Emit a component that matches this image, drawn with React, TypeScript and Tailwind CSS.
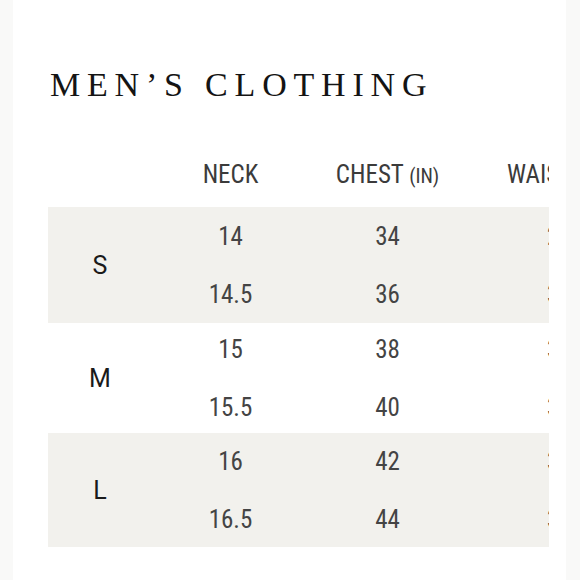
const sizes = [
  { size: 'S', rows: [['14', '34', '28 – 29'], ['14.5', '36', '30 – 31']], shade: true, h: 'h-[116px]' },
  { size: 'M', rows: [['15', '38', '32 – 33'], ['15.5', '40', '34 – 35']], shade: false, h: 'h-[110px]' },
  { size: 'L', rows: [['16', '42', '36 – 37'], ['16.5', '44', '38 – 39']], shade: true, h: 'h-[114px]' },
];

const narrow = "font-['Liberation_Sans_Narrow','Roboto_Condensed','DejaVu_Sans_Condensed',Roboto,sans-serif]";

export default function App() {
  return (
    <div className="w-[580px] h-[580px] bg-[#f9f9f8] overflow-hidden">
      <div className="ml-[13px] w-[553px] h-full bg-white">
        <h1 className="pt-[68px] pl-[37px] font-['Liberation_Serif',serif] text-[34px] leading-[34px] tracking-[0.2em] text-[#141414] whitespace-nowrap">
          MEN’S CLOTHING
        </h1>

        <div className={`mt-[39px] ml-[35px] w-[501px] overflow-hidden ${narrow}`}>
          <div className="flex h-[66px] items-center text-[25px] leading-none text-[#3b3b3b] whitespace-nowrap">
            <div className="w-[104px] shrink-0" />
            <div className="w-[157px] shrink-0 text-center">NECK</div>
            <div className="w-[157px] shrink-0 text-center">
              CHEST <span className="text-[20px]">(IN)</span>
            </div>
            <div className="w-[157px] shrink-0 pl-[41px]">WAIST (IN)</div>
          </div>

          {sizes.map((s) => (
            <div key={s.size} className={`flex items-center ${s.h} ${s.shade ? 'bg-[#f2f1ed]' : 'bg-white'}`}>
              <div className="w-[104px] shrink-0 text-center font-['Roboto',sans-serif] text-[25px] leading-none text-[#1a1a1a]">
                {s.size}
              </div>
              <div className="flex flex-col shrink-0">
                {s.rows.map((r, i) => (
                  <div key={i} className="flex h-[58px] items-center text-[25px] leading-none text-[#444] whitespace-nowrap">
                    <div className="w-[157px] shrink-0 text-center">{r[0]}</div>
                    <div className="w-[157px] shrink-0 text-center">{r[1]}</div>
                    <div className="w-[157px] shrink-0 pl-[81px]">{r[2]}</div>
                  </div>
                ))}
              </div>
            </div>
          ))}
        </div>
      </div>
    </div>
  );
}
